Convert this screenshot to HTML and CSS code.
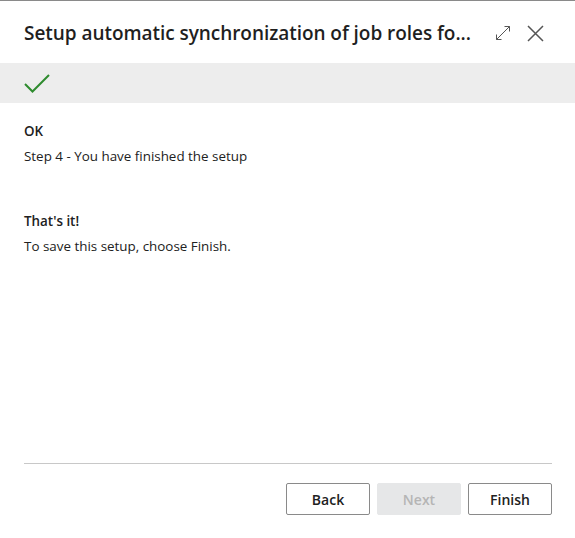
FILE: index.html
```html
<!DOCTYPE html>
<html>
<head>
<meta charset="utf-8">
<link rel="stylesheet" href="styles.css">
</head>
<body>
<div class="dialog">
  <div class="header">
    <h1 class="title">Setup automatic synchronization of job roles fo...</h1>
    <div class="header-icons">
      <svg class="icon" width="16" height="16" viewBox="0 0 16 16"><path d="M1.5 14.5 L14.5 1.5 M9.5 1.5 H14.5 V6.5 M1.5 9.5 V14.5 H6.5" fill="none" stroke="#555" stroke-width="1"/></svg>
      <svg class="icon close" width="17" height="17" viewBox="0 0 17 17"><path d="M1 1 L16 16 M16 1 L1 16" fill="none" stroke="#555" stroke-width="1.5"/></svg>
    </div>
  </div>
  <div class="status-bar">
    <svg width="26" height="20" viewBox="0 0 26 20"><path d="M1 11 L8.5 18.5 L25 2" fill="none" stroke="#2e8b2e" stroke-width="2"/></svg>
  </div>
  <div class="content">
    <div class="section">
      <div class="heading">OK</div>
      <div class="text">Step 4 - You have finished the setup</div>
    </div>
    <div class="section second">
      <div class="heading">That's it!</div>
      <div class="text">To save this setup, choose Finish.</div>
    </div>
  </div>
  <div class="footer">
    <button class="btn">Back</button>
    <button class="btn disabled">Next</button>
    <button class="btn">Finish</button>
  </div>
</div>
</body>
</html>
```
FILE: styles.css
```css
* { box-sizing: border-box; }
html, body { margin: 0; padding: 0; background: #fff; }
body { font-family: "Segoe UI", "Open Sans", "Noto Sans", sans-serif; color: #212121; }
.dialog {
  width: 575px;
  height: 538px;
  border-top: 1px solid #8a8a8a;
  display: flex;
  flex-direction: column;
}
.header {
  display: flex;
  align-items: center;
  justify-content: space-between;
  height: 62px;
  padding: 2px 31px 0 24px;
}
.title {
  margin: 0;
  font-size: 19px;
  font-weight: 600;
  letter-spacing: -0.05px;
  white-space: nowrap;
  color: #1f1f1f;
}
.header-icons { display: flex; align-items: center; gap: 16px; }
.icon { display: block; }
.status-bar {
  background: #ededed;
  height: 40px;
  padding: 0 24px;
  display: flex;
  align-items: center;
}
.content { flex: 1; padding: 19px 24px 0; }
.section.second { margin-top: 47px; }
.heading { font-size: 13.4px; font-weight: 600; line-height: 18px; }
.text { font-size: 13.4px; line-height: 18px; margin-top: 7px; }
.footer {
  margin: 0 23px 0 24px;
  border-top: 1px solid #c8c8c8;
  height: 75px;
  display: flex;
  justify-content: flex-end;
  align-items: flex-start;
  padding-top: 19px;
  gap: 7px;
}
.btn {
  width: 84px;
  height: 32px;
  background: #fff;
  border: 1px solid #8a8a8a;
  border-radius: 2px;
  font-family: inherit;
  font-size: 14px;
  font-weight: 600;
  color: #212121;
}
.btn.disabled { background: #e6e7e8; border-color: #e6e7e8; color: #b5b5b5; }
```
